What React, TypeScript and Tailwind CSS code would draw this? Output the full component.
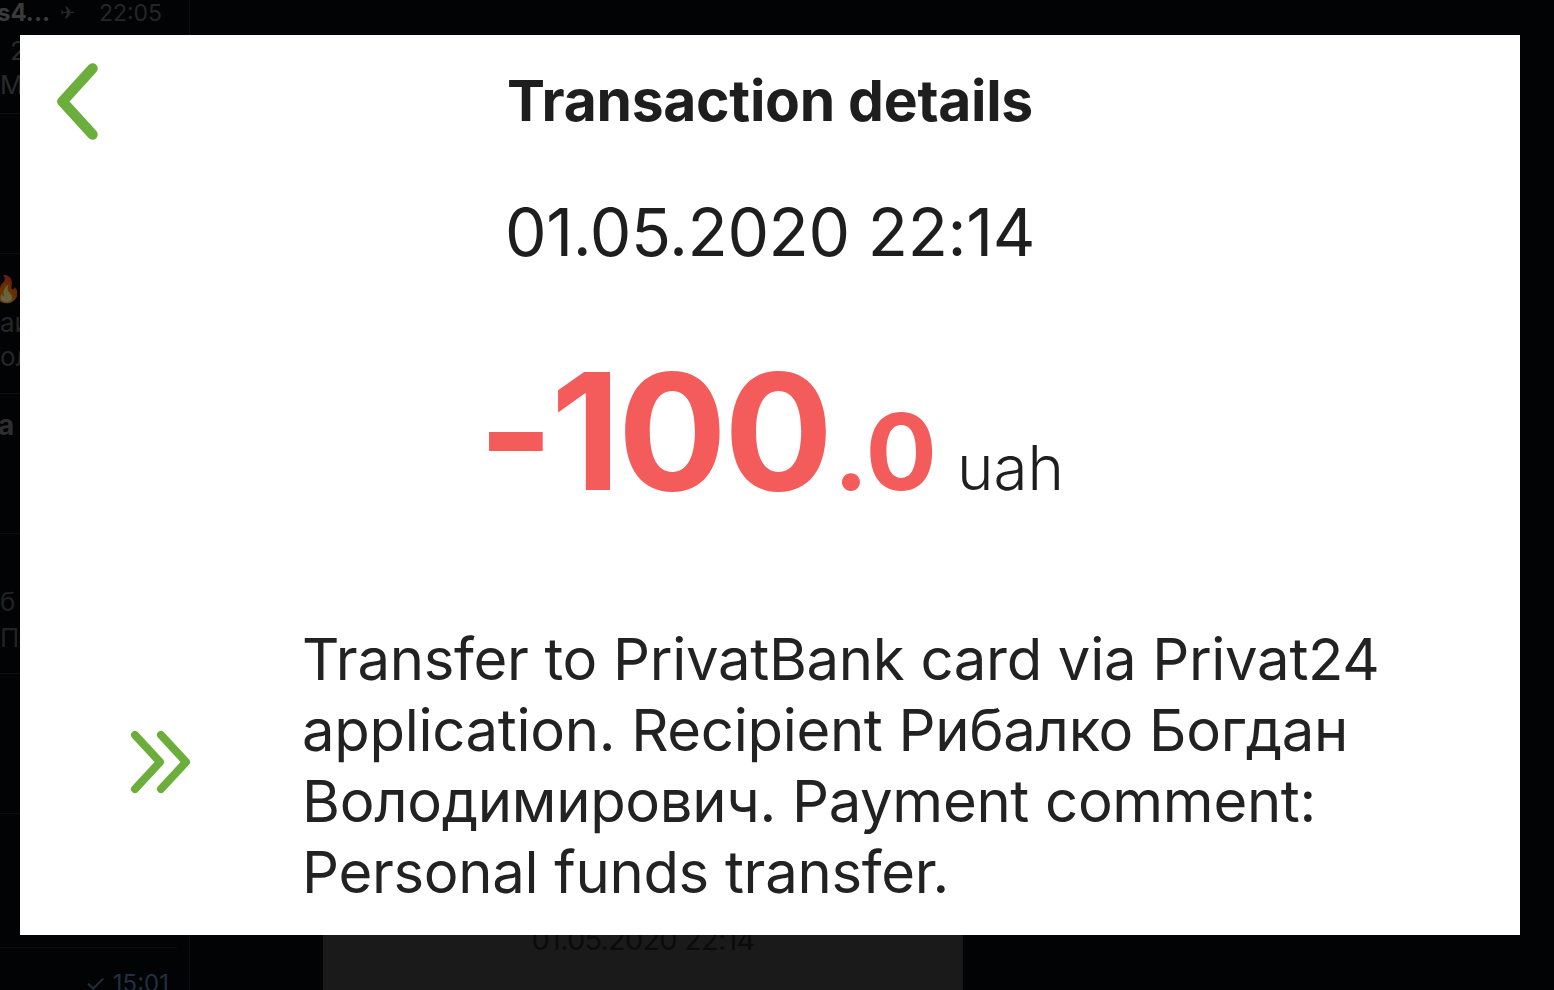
import React from "react";

function BackChevron() {
  return (
    <svg width="60" height="95" viewBox="0 0 60 95" fill="none" className="block">
      <path d="M42.5 13.5 L12.5 46.5 L42.5 79.5" stroke="#6cae3c" strokeWidth="10.5" strokeLinecap="round" strokeLinejoin="round" />
    </svg>
  );
}

function DoubleChevron() {
  return (
    <svg width="72" height="75" viewBox="0 0 72 75" fill="none" className="block">
      <path d="M9 10 L34 37 L9 64" stroke="#6cae3c" strokeWidth="8" strokeLinecap="round" strokeLinejoin="round" />
      <path d="M35 10 L60 37 L35 64" stroke="#6cae3c" strokeWidth="8" strokeLinecap="round" strokeLinejoin="round" />
    </svg>
  );
}

export default function App() {
  return (
    <div className="relative w-[1554px] h-[990px] overflow-hidden bg-[#020304] font-['Inter','Noto_Sans',sans-serif]">
      {/* background app (behind the screenshot card) */}
      <div className="flex h-full">
        <div className="w-[190px] shrink-0 border-r border-[#0d0e10] flex flex-col text-[#2e2e2e]">
          <div className="h-[40px] flex items-center gap-[10px] -ml-[3px]">
            <span className="text-[24px] font-bold text-[#3b3b3b] leading-none -mt-[14px]">s4...</span>
            <span className="text-[18px] text-[#2a2a2a] leading-none -mt-[14px]">✈</span>
            <span className="text-[23px] text-[#262626] leading-none -mt-[14px] ml-[14px]">22:05</span>
          </div>
          <div className="h-[80px] border-b border-[#0c0d0f] flex flex-col text-[26px] leading-[34px] -mt-[6px]">
            <span className="ml-[10px] text-[#2a2a2a]">2</span>
            <span className="text-[#2a2a2a]">M</span>
          </div>
          <div className="h-[140px] border-b border-[#0c0d0f]" />
          <div className="h-[140px] border-b border-[#0c0d0f] flex flex-col pt-[18px] text-[26px] leading-[34px] text-[#262626]">
            <span className="-ml-[10px] opacity-40">🔥</span>
            <span>аи</span>
            <span>ол</span>
          </div>
          <div className="h-[140px] border-b border-[#0c0d0f] pt-[14px] text-[28px] font-bold text-[#2e2e2e] leading-[34px]">
            <span className="-ml-[2px]">а</span>
          </div>
          <div className="h-[140px] border-b border-[#0c0d0f] pt-[50px] flex flex-col text-[26px] leading-[36px] text-[#222]">
            <span>б</span>
            <span>По</span>
          </div>
          <div className="h-[140px] border-b border-[#0c0d0f]" />
          <div className="flex-1 flex flex-col justify-end items-end pr-[12px]">
            <div className="w-[56px] h-[56px] rounded-full bg-[#0b1e2b] mr-[2px] mb-[2px]" />
            <div className="w-full border-t border-[#0c0d0f] mt-[16px] flex justify-end pr-[8px] pt-[18px]">
              <span className="text-[24px] text-[#1f3040] leading-none translate-y-[6px]">✓ 15:01</span>
            </div>
          </div>
        </div>
        <div className="flex-1 flex flex-col justify-end">
          <div className="ml-[133px] w-[640px] h-[120px] bg-[#1a1a1a] flex justify-center pt-[55px]">
            <span className="text-[29px] leading-none text-[#0b0b0b] tracking-[-0.8px]">01.05.2020 22:14</span>
          </div>
        </div>
      </div>

      {/* screenshot card */}
      <div className="absolute left-[20px] top-[35px] w-[1500px] h-[900px] bg-white flex flex-col">
        <div className="grid grid-cols-[1fr_auto_1fr] items-center pt-[20px]">
          <div className="pl-[30px]">
            <BackChevron />
          </div>
          <h1 className="text-[57px] leading-[56px] font-bold text-[#1e1e1e] tracking-[-0.3px] -mt-[4px]">Transaction details</h1>
          <div />
        </div>

        <div className="mt-[47px] text-center text-[66px] leading-[70px] text-[#1e1e1e] tracking-[-0.4px]">
          01.05.2020 22:14
        </div>

        <div className="mt-[83px] flex items-baseline justify-center pl-[2px]">
          <span className="text-[162px] leading-[162px] font-bold text-[#f45b5b] tracking-[-3px]">-100</span>
          <span className="text-[106px] leading-[106px] font-bold text-[#f45b5b] ml-[3px]">.0</span>
          <span className="text-[62px] leading-[62px] font-light text-[#1e1e1e] ml-[20px]">uah</span>
        </div>

        <div className="mt-[112px] flex items-center pl-[106px] gap-[104px]">
          <div className="-mt-[8px]">
            <DoubleChevron />
          </div>
          <p className="text-[58px] leading-[71px] text-[#222222] tracking-[-0.3px]">
            Transfer to PrivatBank card via Privat24
            <br />
            application. Recipient Рибалко Богдан
            <br />
            Володимирович. Payment comment:
            <br />
            Personal funds transfer.
          </p>
        </div>
      </div>
    </div>
  );
}
